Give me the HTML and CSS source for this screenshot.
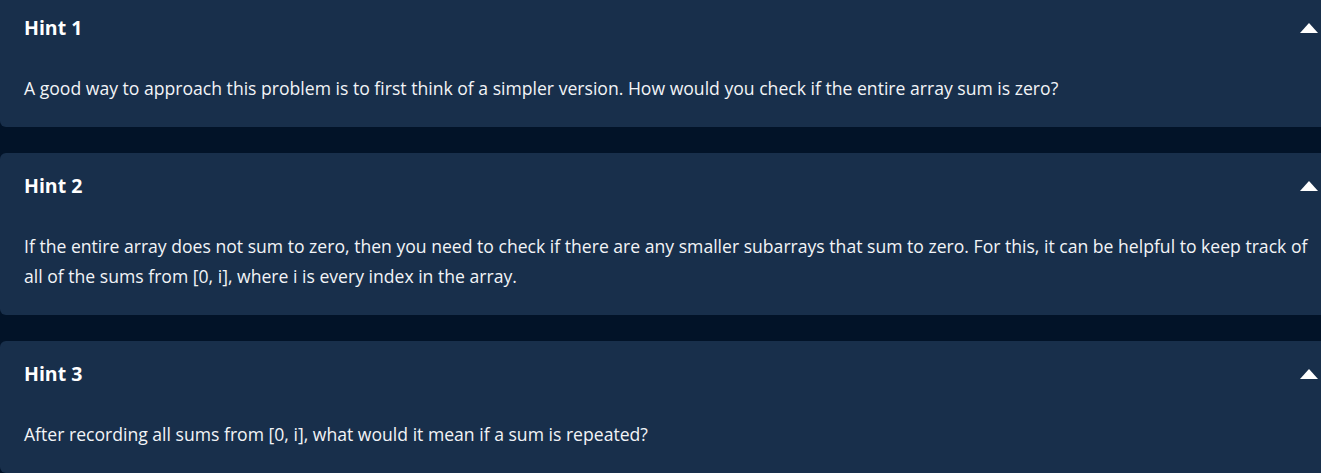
FILE: index.html
```html
<!DOCTYPE html>
<html lang="en">
<head>
<meta charset="utf-8">
<title>Hints</title>
<link rel="stylesheet" href="styles.css">
</head>
<body>
<div class="hints">
  <section class="hint">
    <div class="hint-head">
      <h3 class="hint-title">Hint 1</h3>
      <span class="caret"></span>
    </div>
    <p class="hint-body">A good way to approach this problem is to first think of a simpler version. How would you check if the entire array sum is zero?</p>
  </section>
  <section class="hint">
    <div class="hint-head">
      <h3 class="hint-title">Hint 2</h3>
      <span class="caret"></span>
    </div>
    <p class="hint-body">If the entire array does not sum to zero, then you need to check if there are any smaller subarrays that sum to zero. For this, it can be helpful to keep track of all of the sums from [0, i], where i is every index in the array.</p>
  </section>
  <section class="hint">
    <div class="hint-head">
      <h3 class="hint-title">Hint 3</h3>
      <span class="caret"></span>
    </div>
    <p class="hint-body">After recording all sums from [0, i], what would it mean if a sum is repeated?</p>
  </section>
</div>
</body>
</html>
```

FILE: styles.css
```css
html, body {
  margin: 0;
  padding: 0;
  background: #021328;
  overflow: hidden;
}
body {
  font-family: "Open Sans", "Liberation Sans", sans-serif;
  color: #ffffff;
}
.hints {
  display: flex;
  flex-direction: column;
  gap: 26px;
  margin-top: -5px;
  margin-right: -10px;
}
.hint {
  background: #182f4b;
  border-radius: 6px;
  padding: 20px 13px 24px 24px;
}
.hint-head {
  display: flex;
  align-items: center;
  justify-content: space-between;
}
.hint-title {
  margin: 0;
  font-size: 19.5px;
  font-weight: 700;
  line-height: 26px;
}
.caret {
  width: 0;
  height: 0;
  border-left: 9.5px solid transparent;
  border-right: 9.5px solid transparent;
  border-bottom: 10px solid #ffffff;
}
.hint-body {
  margin: 32px 0 0 0;
  font-size: 17.6px;
  line-height: 30px;
  color: #f2f4f7;
}
```
